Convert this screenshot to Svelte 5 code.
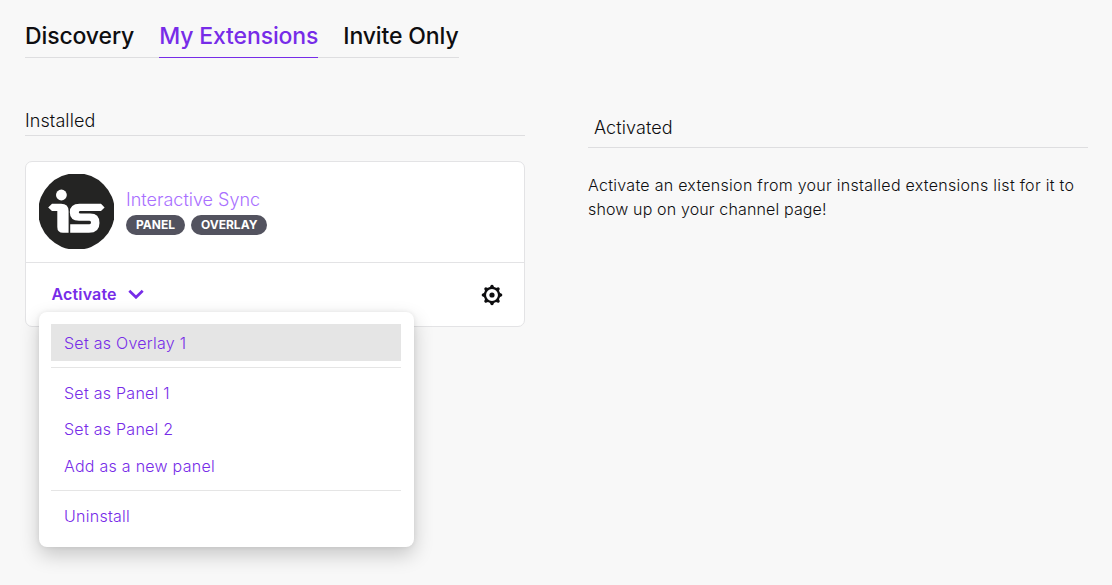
<script>
  const tabs = [
    { label: 'Discovery' },
    { label: 'My Extensions', active: true },
    { label: 'Invite Only' }
  ];
  const tags = ['Panel', 'Overlay'];
  const groups = [
    ['Set as Overlay 1'],
    ['Set as Panel 1', 'Set as Panel 2', 'Add as a new panel'],
    ['Uninstall']
  ];
</script>

<main>
  <nav>
    {#each tabs as tab}
      <a class:active={tab.active}>{tab.label}</a>
    {/each}
  </nav>

  <div class="columns">
    <section class="installed">
      <h2>Installed</h2>
      <article>
        <header>
          <svg class="logo" width="75" height="75" viewBox="0 0 75 75">
            <circle cx="37.5" cy="37.5" r="38.3" fill="#242423" />
            <circle cx="22.4" cy="21" r="5.4" fill="#fff" />
            <path fill="#fff" d="M9.2 33.5L13 29.7H22Q29.6 29.7 29.6 37V58.8H24Q18.3 58.8 18.3 53V37H13Z" />
            <path fill="#fff" d="M65.6 33.5L62 29.7H40.5Q30.8 29.7 30.8 38.3Q30.8 46.7 40 46.7H50.5Q52 46.7 52 48.5T50.5 50.3H31.2V58.8H50Q60.5 58.8 60.5 49T50.5 39.6H41.5Q39.8 39.6 39.8 38.3T41.5 37H62Z" />
          </svg>
          <div class="info">
            <h3>Interactive Sync</h3>
            <div class="tags">
              {#each tags as tag}<span>{tag}</span>{/each}
            </div>
          </div>
        </header>
        <footer>
          <button class="activate">
            Activate
            <svg width="16" height="10" viewBox="0 0 16 10"><path d="M1.3 1.8L8 8.3L14.7 1.8" fill="none" stroke="#772ce8" stroke-width="2.7" /></svg>
          </button>
          <svg class="gear" width="22" height="22" viewBox="-11 -11 22 22">
            {#each [0, 45, 90, 135, 180, 225, 270, 315] as angle}
              <path d="M-2.4 -7L-1.5 -9.2Q-1.2 -10.3 0 -10.3T1.5 -9.2L2.4 -7Z" transform="rotate({angle})" fill="#0e0e10" />
            {/each}
            <circle r="7.1" fill="none" stroke="#0e0e10" stroke-width="2.3" />
            <circle r="2.6" fill="#0e0e10" />
          </svg>
          <div class="menu">
            {#each groups as group, g}
              <ul>
                {#each group as item, i}<li class:hovered={g === 0 && i === 0}>{item}</li>{/each}
              </ul>
            {/each}
          </div>
        </footer>
      </article>
    </section>

    <section class="activated">
      <h2>Activated</h2>
      <p>
        <span>Activate an extension from your installed extensions list for it to</span>
        show up on your channel page!
      </p>
    </section>
  </div>
</main>

<style>
  :global(body) { margin: 0; background: #f8f8f8; }
  main {
    box-sizing: border-box;
    height: 585px;
    overflow: hidden;
    padding: 14px 24px 0 25px;
    font-family: Inter, sans-serif;
    color: #0e0e10;
  }
  h2, h3, p, ul { margin: 0; padding: 0; font-weight: 400; }
  nav {
    display: flex;
    gap: 25px;
    width: max-content;
    height: 43px;
    border-bottom: 1px solid #dedee0;
  }
  nav a {
    height: 43px;
    font-size: 23px;
    line-height: 45px;
    font-weight: 550;
    letter-spacing: -.13px;
    white-space: nowrap;
  }
  nav .active { color: #772ce8; box-shadow: 0 1px 0 #772ce8; }
  .columns { display: flex; justify-content: space-between; }
  .installed, .activated { width: 500px; padding-top: 49px; }
  h2 {
    box-sizing: border-box;
    font-size: 18px;
    font-weight: 300;
    letter-spacing: .08px;
    border-bottom: 1px solid #dedee0;
  }
  .installed h2 { height: 29px; line-height: 28px; }
  .activated h2 { height: 41px; line-height: 42px; padding-left: 6px; }
  article {
    box-sizing: border-box;
    height: 166px;
    margin-top: 25px;
    background: #fff;
    border: 1px solid #e3e3e5;
    border-radius: 7px;
  }
  header {
    box-sizing: border-box;
    display: flex;
    gap: 12px;
    height: 101px;
    padding: 12px 13px;
    border-bottom: 1px solid #e3e3e5;
  }
  .info { padding-top: 12px; }
  h3 { font-size: 18px; line-height: 27px; font-weight: 300; color: #a970ff; }
  .tags { display: flex; gap: 6px; margin-top: 2px; }
  .tags span {
    height: 20px;
    padding: 0 10px;
    border-radius: 10px;
    background: #53535f;
    color: #fff;
    font-size: 12px;
    font-weight: 700;
    line-height: 20px;
    text-transform: uppercase;
  }
  footer {
    position: relative;
    box-sizing: border-box;
    display: flex;
    align-items: center;
    justify-content: space-between;
    height: 63px;
    padding: 0 21px 1px 25.5px;
  }
  .gear { margin-top: 1px; }
  .activate {
    display: flex;
    align-items: center;
    gap: 11.5px;
    padding: 0;
    border: 0;
    background: none;
    color: #772ce8;
    font: 600 16px/24px Inter, sans-serif;
    letter-spacing: .16px;
  }
  .menu {
    position: absolute;
    left: 13px;
    top: 49px;
    box-sizing: border-box;
    width: 375px;
    height: 235px;
    padding: 12px 13px 12px 12px;
    background: #fff;
    border-radius: 8px;
    box-shadow: 0 8px 20px rgba(0, 0, 0, .2), 0 0 5px rgba(0, 0, 0, .08);
  }
  ul { list-style: none; }
  ul + ul { margin-top: 6px; padding-top: 7px; border-top: 1px solid #e5e5e5; }
  li {
    height: 36.6px;
    padding-left: 13px;
    line-height: 38px;
    font-size: 16px;
    font-weight: 300;
    letter-spacing: .26px;
    color: #772ce8;
  }
  ul + ul li { line-height: 36px; }
  .hovered { background: #e5e5e5; }
  p { margin-top: 25px; font-size: 16px; line-height: 24px; font-weight: 300; letter-spacing: .14px; }
  p span { display: block; letter-spacing: .28px; white-space: nowrap; }
</style>
